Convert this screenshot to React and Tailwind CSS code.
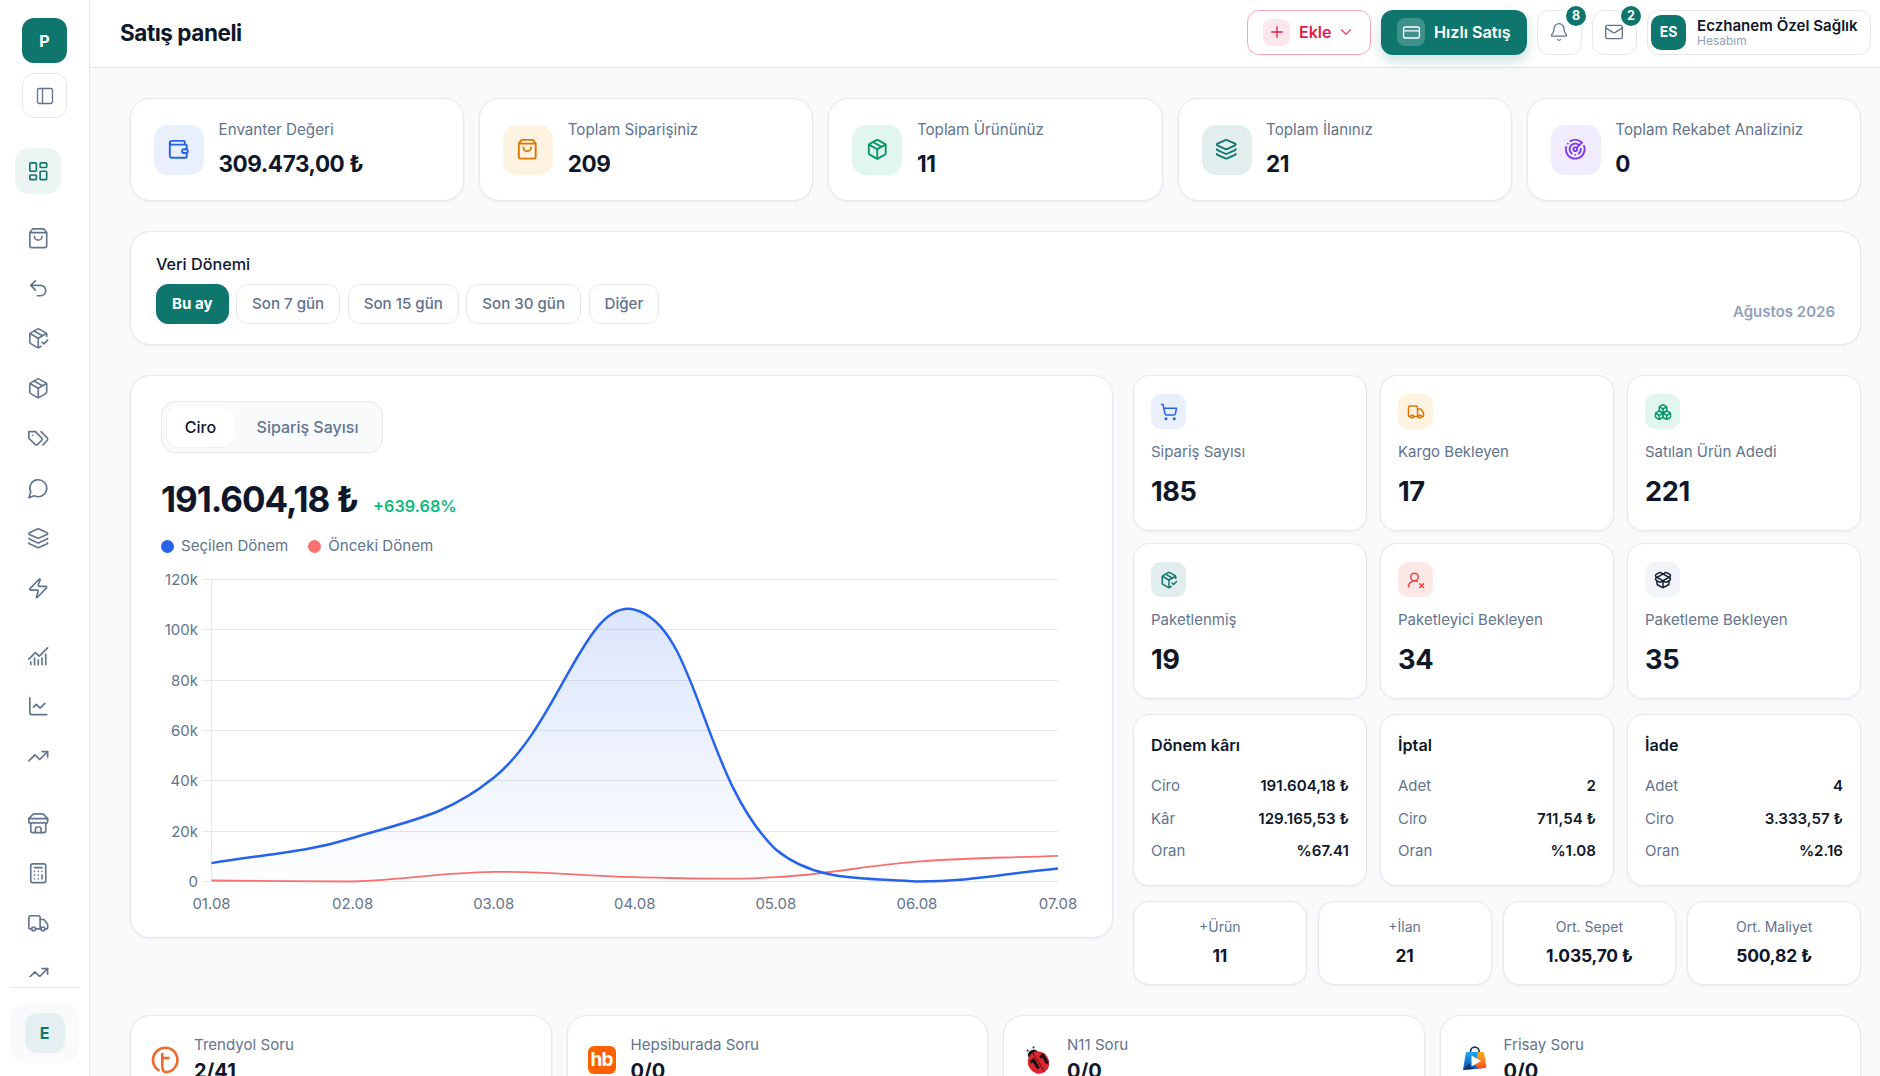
import {
  Bell, Boxes, Calculator, ChartLine, ChartNoAxesCombined, ChevronDown, CreditCard, Layers, LayoutDashboard,
  Mail, Package, PackageCheck, PackageOpen, PanelLeft, Plus, Radar, ShoppingBag, ShoppingCart,
  TrendingUp, Truck, Undo2, UserRoundX, Wallet, Zap,
} from 'lucide-react';

function StrokeIcon({ size, strokeWidth, children }) {
  return (
    <svg width={size} height={size} viewBox="0 0 24 24" fill="none" stroke="currentColor" strokeWidth={strokeWidth} strokeLinecap="round" strokeLinejoin="round">
      {children}
    </svg>
  );
}

function TagsIcon(props) {
  return (
    <StrokeIcon {...props}>
      <path d="M9 5H2v7l6.290 6.290c.940.940 2.480.940 3.420 0l3.580-3.580c.940-.940.940-2.480 0-3.420L9 5Z" />
      <path d="M6 9.010V9" />
      <path d="m15 5 6.300 6.300a2.400 2.400 0 0 1 0 3.400L17 19" />
    </StrokeIcon>
  );
}

function StoreIcon(props) {
  return (
    <StrokeIcon {...props}>
      <path d="m2 7 4.410-4.410A2 2 0 0 1 7.830 2h8.340a2 2 0 0 1 1.420.590L22 7" />
      <path d="M4 12v8a2 2 0 0 0 2 2h12a2 2 0 0 0 2-2v-8" />
      <path d="M15 22v-4a2 2 0 0 0-2-2h-2a2 2 0 0 0-2 2v4" />
      <path d="M2 7h20" />
      <path d="M22 7v3a2 2 0 0 1-2 2a2.700 2.700 0 0 1-1.590-.630.700.700 0 0 0-.820 0A2.700 2.700 0 0 1 16 12a2.700 2.700 0 0 1-1.590-.630.700.700 0 0 0-.820 0A2.700 2.700 0 0 1 12 12a2.700 2.700 0 0 1-1.590-.630.700.700 0 0 0-.820 0A2.700 2.700 0 0 1 8 12a2.700 2.700 0 0 1-1.590-.630.700.700 0 0 0-.820 0A2.700 2.700 0 0 1 4 12a2 2 0 0 1-2-2V7" />
    </StrokeIcon>
  );
}

function ChatIcon(props) {
  return (
    <StrokeIcon {...props}>
      <path d="M7.900 20A9 9 0 1 0 4 16.100L2 22Z" />
    </StrokeIcon>
  );
}

const navGroups = [
  [ShoppingBag, Undo2, PackageCheck, Package, TagsIcon, ChatIcon, Layers, Zap],
  [ChartNoAxesCombined, ChartLine, TrendingUp],
  [StoreIcon, Calculator, Truck, TrendingUp],
];

const totals = [
  { label: 'Envanter Değeri', value: '309.473,00 ₺', icon: Wallet, color: 'bg-[#e9effd] text-[#2563eb]' },
  { label: 'Toplam Siparişiniz', value: '209', icon: ShoppingBag, color: 'bg-[#fef2e0] text-[#d97706]' },
  { label: 'Toplam Ürününüz', value: '11', icon: Package, color: 'bg-[#e1f6ee] text-[#059669]' },
  { label: 'Toplam İlanınız', value: '21', icon: Layers, color: 'bg-[#e1eeed] text-[#0f766e]' },
  { label: 'Toplam Rekabet Analiziniz', value: '0', icon: Radar, color: 'bg-[#f0ebfd] text-[#7c3aed]' },
];

const periods = ['Bu ay', 'Son 7 gün', 'Son 15 gün', 'Son 30 gün', 'Diğer'];

const metrics = [
  { label: 'Sipariş Sayısı', value: '185', icon: ShoppingCart, color: 'bg-[#e9effd] text-[#2563eb]' },
  { label: 'Kargo Bekleyen', value: '17', icon: Truck, color: 'bg-[#fef2e0] text-[#d97706]' },
  { label: 'Satılan Ürün Adedi', value: '221', icon: Boxes, color: 'bg-[#e1f6ee] text-[#059669]' },
  { label: 'Paketlenmiş', value: '19', icon: PackageCheck, color: 'bg-[#e1eeed] text-[#0f766e]' },
  { label: 'Paketleyici Bekleyen', value: '34', icon: UserRoundX, color: 'bg-[#fde8e8] text-[#ef4444]' },
  { label: 'Paketleme Bekleyen', value: '35', icon: PackageOpen, color: 'bg-slate-100 text-slate-900' },
];

const summaries = [
  { title: 'Dönem kârı', rows: [['Ciro', '191.604,18 ₺'], ['Kâr', '129.165,53 ₺'], ['Oran', '%67.41']] },
  { title: 'İptal', rows: [['Adet', '2'], ['Ciro', '711,54 ₺'], ['Oran', '%1.08']] },
  { title: 'İade', rows: [['Adet', '4'], ['Ciro', '3.333,57 ₺'], ['Oran', '%2.16']] },
];

const averages = [
  ['+Ürün', '11'],
  ['+İlan', '21'],
  ['Ort. Sepet', '1.035,70 ₺'],
  ['Ort. Maliyet', '500,82 ₺'],
];

const card = 'bg-white border border-[#e5e7eb] shadow-[0_1px_3px_rgba(15,23,42,0.05)]';

/* ---------- chart ---------- */

const days = ['01.08', '02.08', '03.08', '04.08', '05.08', '06.08', '07.08'];
const current = [7300, 17300, 41200, 108000, 12700, 0, 5200];
const previous = [400, 0, 3800, 1700, 1700, 7900, 10200];

const plot = { left: 50.5, right: 897, top: 12.5, bottom: 314.5, max: 120000 };

function toPoints(values) {
  return values.map((v, i) => ({
    x: plot.left + ((plot.right - plot.left) * i) / (values.length - 1),
    y: plot.bottom - (v / plot.max) * (plot.bottom - plot.top),
  }));
}

function spline(values, tension = 0.4) {
  const pts = toPoints(values);
  const clamp = (y) => Math.max(plot.top, Math.min(plot.bottom, y));
  const ctrl = pts.map((p, i) => {
    const prev = pts[i - 1] || p;
    const next = pts[i + 1] || p;
    const d01 = Math.hypot(p.x - prev.x, p.y - prev.y);
    const d12 = Math.hypot(next.x - p.x, next.y - p.y);
    const a = (tension * d01) / (d01 + d12);
    const b = (tension * d12) / (d01 + d12);
    return {
      inX: p.x - a * (next.x - prev.x),
      inY: clamp(p.y - a * (next.y - prev.y)),
      outX: p.x + b * (next.x - prev.x),
      outY: clamp(p.y + b * (next.y - prev.y)),
    };
  });
  return pts.reduce((d, p, i) => {
    if (i === 0) return `M${p.x} ${p.y}`;
    const o = ctrl[i - 1];
    const c = ctrl[i];
    return `${d} C${o.outX} ${o.outY} ${c.inX} ${c.inY} ${p.x} ${p.y}`;
  }, '');
}

function RevenueChart() {
  const line = spline(current);
  return (
    <svg viewBox="0 0 922 352" className="block w-[922px] h-[352px] text-[15px] overflow-visible" fill="none">
      <defs>
        <linearGradient id="fill" x1="0" y1={plot.top} x2="0" y2={plot.bottom} gradientUnits="userSpaceOnUse">
          <stop offset="0" stopColor="#2563eb" stopOpacity="0.18" />
          <stop offset="1" stopColor="#2563eb" stopOpacity="0.01" />
        </linearGradient>
      </defs>
      {[120, 100, 80, 60, 40, 20, 0].map((t, i) => {
        const y = Math.floor(plot.top + ((plot.bottom - plot.top) * i) / 6) + 0.5;
        return (
          <g key={t}>
            <path d={`M41 ${y}H${plot.right}`} stroke="#e5e7eb" />
            <text x="37" y={y + 5} textAnchor="end" fill="#64748b">{t ? `${t}k` : '0'}</text>
          </g>
        );
      })}
      <path d={`M${plot.left} ${plot.top}V${plot.bottom}`} stroke="#e5e7eb" />
      {days.map((d, i) => (
        <text key={d} x={plot.left + ((plot.right - plot.left) * i) / 6} y="342" textAnchor="middle" fill="#64748b">{d}</text>
      ))}
      <path d={spline(previous)} stroke="#f87171" strokeWidth="1.8" />
      <path d={`${line} L${plot.right} ${plot.bottom} L${plot.left} ${plot.bottom}Z`} fill="url(#fill)" />
      <path d={line} stroke="#2563eb" strokeWidth="2.5" />
    </svg>
  );
}

/* ---------- marketplace logos ---------- */

function TrendyolLogo() {
  return (
    <svg viewBox="0 0 28 28" className="size-7" fill="none" stroke="#ee6a2c" strokeWidth="2.6">
      <path d="M8.500 24.800A12.200 12.200 0 1 1 15 26.200Q11.300 25.500 11.300 21V7" />
      <path d="M11.500 12H18.500" />
    </svg>
  );
}

function HepsiburadaLogo() {
  return (
    <div className="size-7 rounded-md bg-[#ff6000] text-white font-bold text-[19px] leading-[27px] text-center tracking-tighter">hb</div>
  );
}

function N11Logo() {
  return (
    <svg viewBox="0 0 28 28" className="size-7">
      <circle cx="3.500" cy="4.500" r="1" fill="#111" />
      <circle cx="9.500" cy="1.500" r="1" fill="#111" />
      <path d="M3.500 4.500L6 7M9.500 1.500L9.500 5" stroke="#999" strokeWidth=".6" />
      <ellipse cx="8.800" cy="8" rx="5.300" ry="4" transform="rotate(-30 8.800 8)" fill="#111" />
      <ellipse cx="14.500" cy="16.500" rx="10.500" ry="11.300" transform="rotate(-30 14.500 16.500)" fill="#d9252b" />
      <path d="M9 7L20.500 26" stroke="#5c0d10" strokeWidth="1" />
      <path d="M6.500 16.500L9.500 14L14.500 22.500M16 11.500L18.800 9L23.500 17.500" stroke="#111" strokeWidth="3" fill="none" />
    </svg>
  );
}

function FrisayLogo() {
  return (
    <svg viewBox="0 0 28 28" className="size-7">
      <defs>
        <linearGradient id="bagBlue" x1="0" y1="0" x2="0" y2="1">
          <stop offset="0" stopColor="#1ea7f5" />
          <stop offset="1" stopColor="#0b4fae" />
        </linearGradient>
        <linearGradient id="bagOrange" x1="0" y1="0" x2="0" y2="1">
          <stop offset="0" stopColor="#fdb022" />
          <stop offset="1" stopColor="#f4511e" />
        </linearGradient>
      </defs>
      <path d="M9.500 7V5.500a4.300 4.300 0 0 1 8.600 0V7" fill="none" stroke="#12356f" strokeWidth="1.700" />
      <path d="M5 6H22L24 22L2 24Z" fill="url(#bagBlue)" />
      <path d="M17 6H23L25.500 21.500L17.500 22.700L14 19Z" fill="url(#bagOrange)" />
      <path d="M2 24L8 17.500L13 23Z" fill="#12356f" />
      <path d="M10.500 9.500L20 15L10.500 20.500Z" fill="#fff" />
    </svg>
  );
}

const questions = [
  { label: 'Trendyol Soru', value: '2/41', logo: TrendyolLogo },
  { label: 'Hepsiburada Soru', value: '0/0', logo: HepsiburadaLogo },
  { label: 'N11 Soru', value: '0/0', logo: N11Logo },
  { label: 'Frisay Soru', value: '0/0', logo: FrisayLogo },
];

/* ---------- layout ---------- */

function Sidebar() {
  return (
    <aside className="w-[90px] shrink-0 h-full bg-white border-r border-[#e5e7eb] flex flex-col">
      <div className="flex flex-col items-center gap-2.5 pt-[18px]">
        <div className="size-[45px] rounded-xl bg-[#0f766e] text-white font-bold text-base flex items-center justify-center">P</div>
        <button className="size-[45px] rounded-xl border border-[#e5e7eb] text-slate-500 flex items-center justify-center">
          <PanelLeft size={20} strokeWidth={1.6} />
        </button>
      </div>
      <nav className="flex-1 min-h-0 overflow-hidden mt-[30px] mb-[10px] pl-[15px]">
        <div className="size-[46px] rounded-[14px] bg-[#ecf5f4] text-[#0f766e] flex items-center justify-center">
          <LayoutDashboard size={22.5} strokeWidth={1.75} />
        </div>
        {navGroups.map((group, gi) => (
          <div key={gi} className="mt-[21.5px] flex flex-col gap-1">
            {group.map((Icon, i) => (
              <button key={i} className="size-[46px] text-slate-500 flex items-center justify-center">
                <Icon size={22.5} strokeWidth={1.75} />
              </button>
            ))}
          </div>
        ))}
      </nav>
      <div className="mx-2.5 border-t border-[#e5e7eb] pt-[15px] pb-[13px]">
        <div className="h-[60px] rounded-2xl bg-slate-50 flex items-center justify-center">
          <div className="size-10 rounded-xl bg-[#e5eff1] text-[#0f766e] font-bold text-base flex items-center justify-center">E</div>
        </div>
      </div>
    </aside>
  );
}

function HeaderIcon({ icon: Icon, count }) {
  return (
    <button className="relative size-[45px] rounded-xl border border-[#e5e7eb] text-slate-500 flex items-center justify-center">
      <Icon size={20} strokeWidth={1.6} className="mr-px" />
      <span className="absolute -top-[5px] -right-[5px] size-5 rounded-full bg-[#0f766e] text-white text-[12.5px] leading-5 font-bold text-center">
        {count}
      </span>
    </button>
  );
}

function Header() {
  return (
    <header className="h-[68px] shrink-0 bg-white border-b border-[#e5e7eb] flex items-center justify-between pl-[30px] pr-[9px] pb-[3px]">
      <h1 className="pt-0.5 text-[22.5px] font-bold tracking-[-0.02em] text-slate-900">Satış paneli</h1>
      <div className="flex items-center gap-2.5">
        <button className="h-[45px] w-[124px] pl-[15px] rounded-xl border border-[#fda4b8] text-[#e11d48] flex items-center text-[16px] font-semibold">
          <span className="size-[27px] rounded-lg bg-[#fce8ec] flex items-center justify-center mr-[9px]">
            <Plus size={18} strokeWidth={1.75} />
          </span>
          Ekle
          <ChevronDown size={18} strokeWidth={1.75} className="ml-1.5 opacity-80" />
        </button>
        <button className="h-[45px] w-[146px] pl-4 rounded-xl bg-[#0f766e] text-white flex items-center text-[16.2px] font-semibold shadow-[0_6px_14px_rgba(15,118,110,0.22)]">
          <span className="size-7 rounded-lg bg-white/20 flex items-center justify-center mr-[9px]">
            <CreditCard size={19} strokeWidth={1.75} />
          </span>
          Hızlı Satış
        </button>
        <HeaderIcon icon={Bell} count={8} />
        <HeaderIcon icon={Mail} count={2} />
        <div className="h-[45px] w-[224px] rounded-xl border border-[#e5e7eb] flex items-center pl-[3px] gap-[11px]">
          <div className="size-[35px] rounded-[10px] bg-[#0f766e] text-white text-sm font-bold flex items-center justify-center">ES</div>
          <div className="whitespace-nowrap">
            <div className="text-[15.1px] leading-[17px] font-semibold text-slate-900">Eczhanem Özel Sağlık</div>
            <div className="text-xs leading-[13px] text-slate-400">Hesabım</div>
          </div>
        </div>
      </div>
    </header>
  );
}

function ChartPanel() {
  return (
    <section className={`${card} w-[983px] h-[563px] shrink-0 rounded-[20px] pl-[30px] pt-[25px]`}>
      <div className="inline-flex items-center h-[52px] p-[5px] rounded-[14px] border border-[#e5e7eb] bg-slate-50 text-[16px] font-medium">
        <span className="h-10 w-[67px] rounded-xl bg-white text-slate-900 flex items-center justify-center shadow-[0_1px_2px_rgba(15,23,42,0.05)]">Ciro</span>
        <span className="w-[143px] pl-1 text-slate-500 text-center">Sipariş Sayısı</span>
      </div>
      <div className="mt-6 flex items-baseline gap-[15px]">
        <span className="text-[35px] leading-[44px] font-bold tracking-[-0.03em] text-slate-900">191.604,18 ₺</span>
        <span className="text-[16.3px] font-semibold text-[#10b981]">+639.68%</span>
      </div>
      <div className="mt-[13px] flex items-center gap-5 text-[15.1px] leading-6 text-slate-500">
        <span className="flex items-center gap-[7px]"><i className="size-[13px] rounded-full bg-[#2563eb]" />Seçilen Dönem</span>
        <span className="flex items-center gap-[7px]"><i className="size-[13px] rounded-full bg-[#f87171]" />Önceki Dönem</span>
      </div>
      <div className="mt-[9px]">
        <RevenueChart />
      </div>
    </section>
  );
}

export default function App() {
  return (
    <div className="w-[1880px] h-[1076px] overflow-hidden flex bg-[#f8fafc] text-slate-900 font-['Inter',sans-serif]">
      <Sidebar />
      <div className="flex-1 min-w-0 flex flex-col">
        <Header />
        <main className="flex-1 min-h-0 overflow-hidden pt-[30px] pl-10 pr-[19px]">
          <div className="grid grid-cols-5 gap-[15px]">
            {totals.map(({ label, value, icon: Icon, color }) => (
              <div key={label} className={`${card} h-[103px] rounded-[20px] flex items-center pl-[23px] gap-[14.5px]`}>
                <div className={`size-[50px] rounded-[14px] flex items-center justify-center ${color}`}>
                  <Icon size={22.5} strokeWidth={2} className="mr-px" />
                </div>
                <div>
                  <div className="-mt-px text-[15.2px] leading-6 text-slate-500">{label}</div>
                  <div className="mt-[6px] text-[22.5px] leading-8 font-bold tracking-[-0.02em]">{value}</div>
                </div>
              </div>
            ))}
          </div>

          <section className={`${card} mt-[30px] h-[114px] rounded-[20px] pl-[25px] pr-[25px] pt-5 flex justify-between`}>
            <div>
              <div className="text-[16.2px] leading-6 font-medium">Veri Dönemi</div>
              <div className="mt-2 flex gap-[7.5px]">
                {periods.map((p, i) => (
                  <button
                    key={p}
                    className={`h-10 px-[15px] rounded-xl border text-[15.1px] ${i === 0 ? 'bg-[#0f766e] border-[#0f766e] text-white font-bold' : 'bg-white border-[#e5e7eb] text-slate-500 font-medium'}`}
                  >
                    {p}
                  </button>
                ))}
              </div>
            </div>
            <div className="pt-[48px] text-[15px] leading-6 font-semibold text-slate-400">Ağustos 2026</div>
          </section>

          <div className="mt-[30px] flex gap-5 items-start">
            <ChartPanel />
            <div className="flex-1 min-w-0">
              <div className="grid grid-cols-3 gap-x-[13px] gap-y-3">
                {metrics.map(({ label, value, icon: Icon, color }) => (
                  <div key={label} className={`${card} h-[156px] rounded-2xl pl-[17px] pt-[18px]`}>
                    <div className={`size-[35px] rounded-[10px] flex items-center justify-center ${color}`}>
                      <Icon size={18} strokeWidth={2} />
                    </div>
                    <div className="mt-[11px] text-[15px] leading-6 text-slate-500">{label}</div>
                    <div className="mt-3 text-[27.2px] leading-8 font-bold tracking-[-0.015em]">{value}</div>
                  </div>
                ))}
              </div>
              <div className="mt-[15px] grid grid-cols-3 gap-x-[13px]">
                {summaries.map(({ title, rows }) => (
                  <div key={title} className={`${card} h-[172px] rounded-2xl px-[17px] pt-[18px]`}>
                    <div className="text-[16.2px] leading-6 font-semibold">{title}</div>
                    <div className="mt-[17px] flex flex-col gap-[8.5px] text-[15px] leading-6">
                      {rows.map(([k, v]) => (
                        <div key={k} className="flex justify-between">
                          <span className="text-slate-500">{k}</span>
                          <span className="text-[15.1px] font-semibold">{v}</span>
                        </div>
                      ))}
                    </div>
                  </div>
                ))}
              </div>
              <div className="mt-[15px] grid grid-cols-4 gap-x-[11px]">
                {averages.map(([k, v]) => (
                  <div key={k} className={`${card} h-[84px] rounded-2xl text-center pt-[15px]`}>
                    <div className="text-[14px] leading-5 text-slate-500">{k}</div>
                    <div className="mt-[5px] text-[17.4px] leading-7 font-bold tracking-[-0.01em]">{v}</div>
                  </div>
                ))}
              </div>
            </div>
          </div>

          <div className="mt-[30px] grid grid-cols-4 gap-[15px]">
            {questions.map(({ label, value, logo: Logo }) => (
              <div key={label} className={`${card} h-[98px] rounded-[20px] flex items-start pt-[17px] pl-5 gap-[15px]`}>
                <div className="mt-[13px]"><Logo /></div>
                <div>
                  <div className="text-[15.1px] leading-6 text-slate-500">{label}</div>
                  <div className="text-[20px] leading-7 font-bold">{value}</div>
                </div>
              </div>
            ))}
          </div>
        </main>
      </div>
    </div>
  );
}
